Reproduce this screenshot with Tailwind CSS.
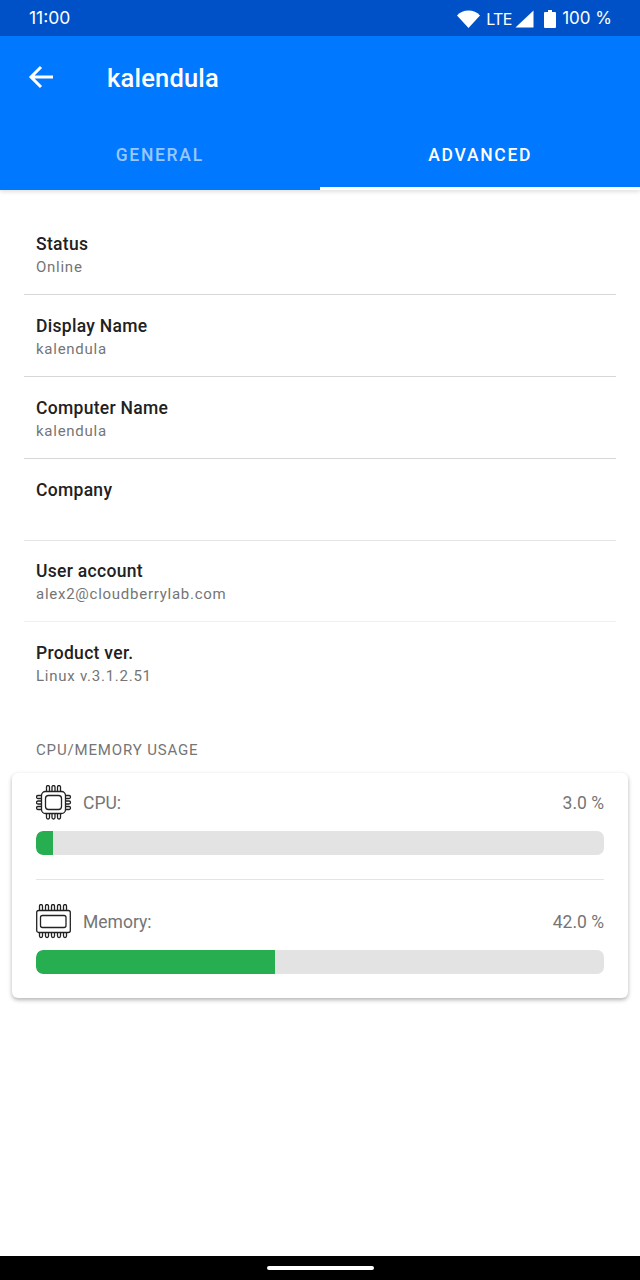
<!DOCTYPE html>
<html lang="en">

<head>
  <meta charset="UTF-8">
  <meta name="viewport" content="width=device-width, initial-scale=1.0">
  <script src="https://cdn.jsdelivr.net/npm/@tailwindcss/browser@4"></script>
  <title>kalendula</title>
</head>

<body class="bg-white font-['Roboto',sans-serif] w-[640px] h-[1280px] overflow-hidden flex flex-col">
  <!-- status bar -->
  <div class="h-9 shrink-0 bg-[#0051c7] text-white flex items-center justify-between pl-[29px] pr-[29px] pt-[1px] font-['Inter',sans-serif] text-[17.500px]">
    <span>11:00</span>
    <div class="flex items-center mr-[-1px]">
      <svg width="23" height="18" viewBox="0 0 23 18" class="mr-[6px]"><path d="M0 5.500C3 2.200 7 .5 11.500 .5S20 2.200 23 5.500L11.500 18z" fill="#fff"/></svg>
      <span class="w-[25px] tracking-[-0.6px] text-[16px]">LTE</span>
      <svg width="19" height="18" viewBox="0 0 19 18" class="ml-[4px] mr-[10px]"><path d="M18.500 0.500V17.500H0.500z" fill="#fff"/></svg>
      <svg width="12" height="18" viewBox="0 0 12 18" class="mr-[6px]"><path d="M4 0h4v2h3a1 1 0 0 1 1 1v14a1 1 0 0 1-1 1H1a1 1 0 0 1-1-1V3a1 1 0 0 1 1-1h3z" fill="#fff"/></svg>
      <span class="text-[17px]">100 %</span>
    </div>
  </div>

  <!-- app bar -->
  <div class="relative h-[154px] shrink-0 bg-[#0078ff] text-white flex flex-col shadow-[0_2px_4px_rgba(0,0,0,0.12)]">
    <div class="h-[82px] flex items-center pl-[28px]">
      <svg width="26" height="26" viewBox="0 0 26 26" fill="none" stroke="#fff" stroke-width="3"><path d="M25 13H3M13 3 3 13l10 10"/></svg>
      <span class="ml-[53px] pt-[3px] text-[25.500px] font-medium tracking-[0.2px]">kalendula</span>
    </div>
    <div class="flex-1 flex text-[17.500px] font-medium tracking-[1.700px]">
      <div class="flex-1 flex items-center justify-center text-white/60 pt-[2px]">GENERAL</div>
      <div class="flex-1 flex items-center justify-center border-b-[3px] border-white pt-[5px] pl-[1px]">ADVANCED</div>
    </div>
  </div>

  <!-- details -->
  <div class="h-[23px] shrink-0"></div>
  <div class="mx-6 flex flex-col">
    <div class="h-[82px] px-3 pt-[20px] border-b border-[#d6d6d6]">
      <div class="text-[17.500px] leading-[22px] font-medium tracking-[0.3px] text-[#212121]">Status</div>
      <div class="mt-[1px] text-[15px] leading-[22px] tracking-[0.74px] text-[#757575]">Online</div>
    </div>
    <div class="h-[82px] px-3 pt-[20px] border-b border-[#d6d6d6]">
      <div class="text-[17.500px] leading-[22px] font-medium tracking-[0.3px] text-[#212121]">Display Name</div>
      <div class="mt-[1px] text-[15px] leading-[22px] tracking-[0.74px] text-[#757575]">kalendula</div>
    </div>
    <div class="h-[82px] px-3 pt-[20px] border-b border-[#d6d6d6]">
      <div class="text-[17.500px] leading-[22px] font-medium tracking-[0.3px] text-[#212121]">Computer Name</div>
      <div class="mt-[1px] text-[15px] leading-[22px] tracking-[0.74px] text-[#757575]">kalendula</div>
    </div>
    <div class="h-[82px] px-3 pt-[20px] border-b border-[#e4e4e4]">
      <div class="text-[17.500px] leading-[22px] font-medium tracking-[0.3px] text-[#212121]">Company</div>
    </div>
    <div class="h-[81px] px-3 pt-[19px] border-b border-[#f0f0f0]">
      <div class="text-[17.500px] leading-[22px] font-medium tracking-[0.3px] text-[#212121]">User account</div>
      <div class="mt-[1px] text-[15px] leading-[22px] tracking-[0.74px] text-[#757575]">alex2@cloudberrylab.com</div>
    </div>
    <div class="h-[82px] px-3 pt-[20px]">
      <div class="text-[17.500px] leading-[22px] font-medium tracking-[0.3px] text-[#212121]">Product ver.</div>
      <div class="mt-[1px] text-[15px] leading-[22px] tracking-[0.74px] text-[#757575]">Linux v.3.1.2.51</div>
    </div>
  </div>

  <div class="mt-[35px] px-9 text-[15px] leading-[22px] tracking-[0.85px] text-[#757575]">CPU/MEMORY USAGE</div>

  <!-- usage card -->
  <div class="mx-3 mt-[12px] h-[225px] rounded-[6px] bg-white shadow-[0_2px_4px_rgba(0,0,0,0.3)] px-6 pt-[12px]">
    <div class="h-[36px] flex items-center text-[#757575] text-[17.500px]">
      <svg width="36" height="36" viewBox="0 0 36 36" fill="none" stroke="#222" stroke-width="1.300">
        <g transform="translate(-0.5 -0.5)">
          <rect x="6" y="7" width="24" height="22" rx="4"/>
          <rect x="10" y="11" width="16" height="14" rx="3"/>
          <path d="M11 7V2.500a1.500 1.500 0 0 1 3 0V7M16.500 7V2.500a1.500 1.500 0 0 1 3 0V7M22 7V2.500a1.500 1.500 0 0 1 3 0V7"/>
          <path d="M11 29v4a1.500 1.500 0 0 0 3 0v-4M16.500 29v4a1.500 1.500 0 0 0 3 0v-4M22 29v4a1.500 1.500 0 0 0 3 0v-4"/>
          <path d="M6 11H2.500a1.500 1.500 0 0 0 0 3H6M6 16.500H2.500a1.500 1.500 0 0 0 0 3H6M6 22H2.500a1.500 1.500 0 0 0 0 3H6"/>
          <path d="M30 11h3.500a1.500 1.500 0 0 1 0 3H30M30 16.500h3.500a1.500 1.500 0 0 1 0 3H30M30 22h3.500a1.500 1.500 0 0 1 0 3H30"/>
        </g>
      </svg>
      <span class="ml-[11px] flex-1">CPU:</span>
      <span>3.0 %</span>
    </div>
    <div class="mt-[10px] h-6 rounded-[7px] bg-[#e3e3e3] overflow-hidden">
      <div class="h-full bg-[#27ae50] rounded-l-[7px]" style="width:3%"></div>
    </div>
    <div class="mt-6 border-t border-[#e4e4e4]"></div>
    <div class="mt-[24px] h-[36px] flex items-center text-[#757575] text-[17.500px]">
      <svg width="36" height="36" viewBox="0 0 36 36" fill="none" stroke="#222" stroke-width="1.300">
        <rect x="0.700" y="6.500" width="33.600" height="22" rx="2"/>
        <rect x="4.500" y="11.500" width="25.500" height="12" rx="2"/>
        <path d="M3.500 6.500V2a1.500 1.500 0 0 1 3 0V6.500M9.500 6.500V2a1.500 1.500 0 0 1 3 0V6.500M15.500 6.500V2a1.500 1.500 0 0 1 3 0V6.500M21.500 6.500V2a1.500 1.500 0 0 1 3 0V6.500M27.500 6.500V2a1.500 1.500 0 0 1 3 0V6.500"/>
        <path d="M3.500 28.500V32a1.500 1.500 0 0 0 3 0V28.500M9.500 28.500V32a1.500 1.500 0 0 0 3 0V28.500M15.500 28.500V32a1.500 1.500 0 0 0 3 0V28.500M21.500 28.500V32a1.500 1.500 0 0 0 3 0V28.500M27.500 28.500V32a1.500 1.500 0 0 0 3 0V28.500"/>
      </svg>
      <span class="ml-[11px] flex-1">Memory:</span>
      <span>42.0 %</span>
    </div>
    <div class="mt-[10px] h-6 rounded-[7px] bg-[#e3e3e3] overflow-hidden">
      <div class="h-full bg-[#27ae50] rounded-l-[7px]" style="width:42%"></div>
    </div>
  </div>

  <!-- nav bar -->
  <div class="mt-auto h-6 shrink-0 bg-black flex items-center justify-center">
    <div class="w-[107px] h-[4px] rounded-full bg-white"></div>
  </div>
</body>

</html>
